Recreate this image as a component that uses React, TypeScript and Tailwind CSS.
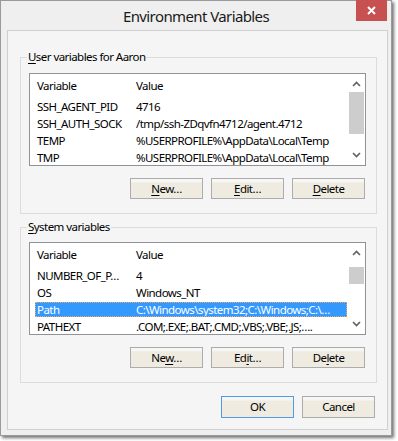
import React from "react";

type Row = { name: string; value: string; selected?: boolean };

const userVars: Row[] = [
  { name: "SSH_AGENT_PID", value: "4716" },
  { name: "SSH_AUTH_SOCK", value: "/tmp/ssh-ZDqvfn4712/agent.4712" },
  { name: "TEMP", value: "%USERPROFILE%\\AppData\\Local\\Temp" },
  { name: "TMP", value: "%USERPROFILE%\\AppData\\Local\\Temp" },
];

const systemVars: Row[] = [
  { name: "NUMBER_OF_P…", value: "4" },
  { name: "OS", value: "Windows_NT" },
  { name: "Path", value: "C:\\Windows\\system32;C:\\Windows;C:\\…", selected: true },
  { name: "PATHEXT", value: ".COM;.EXE;.BAT;.CMD;.VBS;.VBE;.JS;…." },
];

function Chevron({ up }: { up?: boolean }) {
  return (
    <svg width="9" height="6" viewBox="0 0 9 6" className="text-[#606060]">
      <path
        d={up ? "M1 5 L4.5 1.5 L8 5" : "M1 1 L4.5 4.5 L8 1"}
        fill="none"
        stroke="currentColor"
        strokeWidth="1.6"
      />
    </svg>
  );
}

function ListView({ rows, thumbTop, thumbHeight }: { rows: Row[]; thumbTop: string; thumbHeight: string }) {
  return (
    <div className="ml-[8px] w-[337px] h-[93px] border border-[#8f9296] bg-white flex overflow-hidden">
      <div className="flex-1 min-w-0">
        <div className="h-[24px] flex items-center pl-[7px]">
          <span className="w-[99px] shrink-0">Variable</span>
          <span>Value</span>
        </div>
        {rows.map((r) => (
          <div key={r.name} className="h-[17px] flex items-center">
            {r.selected ? (
              <div className="ml-[5px] w-[312px] h-[15px] flex items-center overflow-hidden bg-[#3399ff] text-white border border-dotted border-[#f0a860] pl-[1px]">
                <span className="w-[99px] shrink-0 whitespace-nowrap">{r.name}</span>
                <span className="whitespace-nowrap">{r.value}</span>
              </div>
            ) : (
              <div className="pl-[7px] flex items-center">
                <span className="w-[99px] shrink-0 whitespace-nowrap">{r.name}</span>
                <span className="whitespace-nowrap">{r.value}</span>
              </div>
            )}
          </div>
        ))}
      </div>
      <div className="w-[17px] shrink-0 flex flex-col items-center">
        <div className="h-[17px] flex items-center justify-center pt-[2px]">
          <Chevron up />
        </div>
        <div className={`w-[15px] bg-[#cdcdcd] ${thumbTop} ${thumbHeight}`} />
        <div className="flex-1" />
        <div className="h-[17px] flex items-center justify-center pb-[3px]">
          <Chevron />
        </div>
      </div>
    </div>
  );
}

function Button({ children, primary }: { children: React.ReactNode; primary?: boolean }) {
  return (
    <div
      className={`w-[73px] h-full min-h-[21px] flex items-center justify-center border bg-gradient-to-b from-[#f6f6f4] from-[15%] to-[#efebe1] to-[20%] ${
        primary ? "border-[#4f9be6]" : "border-[#acacac]"
      }`}
    >
      {children}
    </div>
  );
}

function ButtonRow({ keys }: { keys: [string, string, string] }) {
  const label = (text: string, key: string) => {
    const i = text.indexOf(key);
    return (
      <span>
        {text.slice(0, i)}
        <u className="underline-offset-2">{key}</u>
        {text.slice(i + 1)}
      </span>
    );
  };
  return (
    <div className="mt-[12px] mr-[11px] h-[21px] flex justify-end gap-[8px]">
      <Button>{label("New…", keys[0])}</Button>
      <Button>{label("Edit…", keys[1])}</Button>
      <Button>{label("Delete", keys[2])}</Button>
    </div>
  );
}

function GroupBox({
  title,
  accel,
  children,
  className,
}: {
  title: string;
  accel: string;
  children: React.ReactNode;
  className?: string;
}) {
  return (
    <div className={`relative ml-[12px] w-[357px] border border-[#dcdcdc] ${className ?? ""}`}>
      <div className="absolute left-[6px] -top-[9px] px-[1px] bg-[#f5f5f5] leading-[16px]">
        <u className="underline-offset-2">{accel}</u>
        {title.slice(1)}
      </div>
      {children}
    </div>
  );
}

export default function App() {
  return (
    <div
      className="w-[398px] h-[441px] bg-white text-[11.5px] tracking-[-0.55px] text-black"
      style={{ fontFamily: '"Noto Sans", "Open Sans", sans-serif' }}
    >
      <div className="w-[392px] h-[436px] bg-[#efefef] border border-[#9a9a9a] shadow-[2px_2px_3px_rgba(0,0,0,0.55)] flex flex-col">
        <div className="relative h-[29px] flex items-center justify-center">
          <span className="text-[15px] tracking-[-0.6px] text-[#1a1a1a] mt-[1px]">Environment Variables</span>
          <div className="absolute right-[4px] -top-[1px] w-[31px] h-[21px] bg-[#c75050] flex items-center justify-center">
            <svg width="9" height="9" viewBox="0 0 9 9">
              <path d="M1 1 L8 8 M8 1 L1 8" stroke="white" strokeWidth="2" />
            </svg>
          </div>
        </div>
        <div className="ml-[6px] w-[381px] h-[400px] border border-[#cfcfcf] bg-[#f5f5f5] pt-[26px]">
          <GroupBox title="User variables for Aaron" accel="U" className="h-[157px] pt-[15px]">
            <ListView rows={userVars} thumbTop="mt-[1px]" thumbHeight="h-[42px]" />
            <ButtonRow keys={["N", "E", "D"]} />
          </GroupBox>
          <GroupBox title="System variables" accel="S" className="mt-[13px] h-[156px] pt-[14px]">
            <ListView rows={systemVars} thumbTop="mt-[7px]" thumbHeight="h-[17px]" />
            <ButtonRow keys={["w", "i", "l"]} />
          </GroupBox>
          <div className="mt-[13px] pr-[12px] h-[22px] flex justify-end gap-[8px]">
            <Button primary>OK</Button>
            <Button>Cancel</Button>
          </div>
        </div>
      </div>
    </div>
  );
}
